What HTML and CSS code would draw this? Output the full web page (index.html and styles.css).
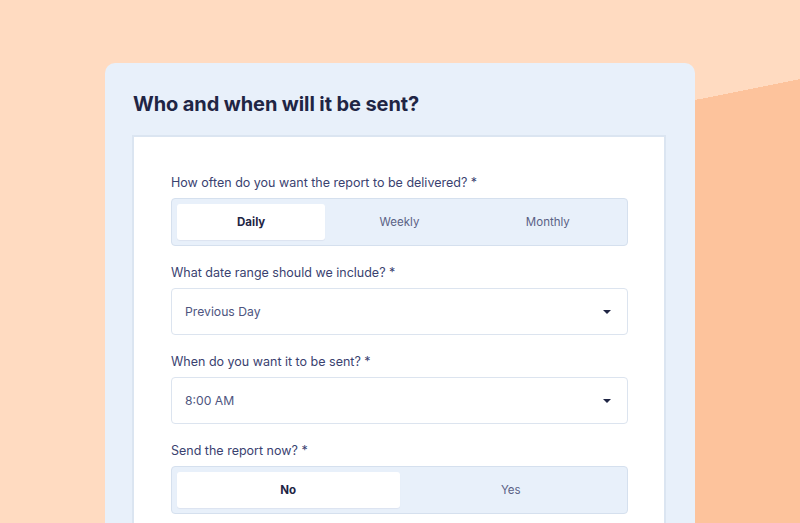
FILE: index.html
```html
<!DOCTYPE html>
<html lang="en">
<head>
    <meta charset="UTF-8">
    <meta name="viewport" content="width=device-width, initial-scale=1.0">
    <title>Report Schedule</title>
    <link rel="stylesheet" href="styles.css">
</head>
<body>
    <div class="schedule-card">
        <h2 class="card-title">Who and when will it be sent?</h2>

        <div class="form-panel">
            <div class="field">
                <label class="field-label">How often do you want the report to be delivered? *</label>
                <div class="segmented">
                    <button class="segment active">Daily</button>
                    <button class="segment">Weekly</button>
                    <button class="segment">Monthly</button>
                </div>
            </div>

            <div class="field">
                <label class="field-label">What date range should we include? *</label>
                <div class="select">
                    <span>Previous Day</span>
                    <span class="caret"></span>
                </div>
            </div>

            <div class="field">
                <label class="field-label">When do you want it to be sent? *</label>
                <div class="select">
                    <span>8:00 AM</span>
                    <span class="caret"></span>
                </div>
            </div>

            <div class="field">
                <label class="field-label">Send the report now? *</label>
                <div class="segmented">
                    <button class="segment active">No</button>
                    <button class="segment">Yes</button>
                </div>
            </div>
        </div>
    </div>
</body>
</html>
```

FILE: styles.css
```css
html, body {
    height: 100%;
}

/* peach backdrop with a darker slanted block on the right */
body {
    margin: 0;
    overflow: hidden;
    font-family: Inter, "Noto Sans", Arial, sans-serif;
    background:
        linear-gradient(168.7deg, transparent 101px, #FDC39C 101px) right top / 120px 100% no-repeat,
        #FFDBC1;
}

.schedule-card {
    width: 590px;
    margin: 63px 0 0 105px;
    padding: 28px 29px 0 27px;
    box-sizing: border-box;
    min-height: 500px;
    background-color: #E8F0FA;
    border-radius: 10px;
}

.card-title {
    margin: 0 0 17px 1px;
    font-size: 20px;
    line-height: 27px;
    font-weight: 700;
    color: #1F2544;
    letter-spacing: -0.1px;
}

.form-panel {
    background-color: #fff;
    border: 2px solid #DBE5F1;
    border-bottom: none;
    padding: 38px 36px 40px 37px;
    min-height: 400px;
}

.field + .field {
    margin-top: 19px;
}

.field-label {
    display: block;
    font-size: 12.5px;
    line-height: 16px;
    color: #3A4270;
    margin-bottom: 7px;
}

/* Segmented buttons */
.segmented {
    display: flex;
    padding: 5px;
    background-color: #E8F0FA;
    border: 1px solid #D5E0EE;
    border-radius: 4px;
    height: 48px;
    box-sizing: border-box;
}

.segment {
    flex: 1;
    border: none;
    background: none;
    border-radius: 3px;
    font-family: inherit;
    font-size: 11.5px;
    color: #5A6185;
    cursor: pointer;
}

.segment.active {
    background-color: #fff;
    color: #1F2544;
    font-weight: 700;
    box-shadow: 0 1px 1px rgba(30, 40, 80, 0.06);
}

/* Dropdowns */
.select {
    display: flex;
    align-items: center;
    justify-content: space-between;
    height: 47px;
    box-sizing: border-box;
    padding: 0 16px 0 13px;
    border: 1px solid #DCE4EF;
    border-radius: 4px;
    font-size: 12.2px;
    color: #4E5580;
}

.caret {
    width: 0;
    height: 0;
    border-left: 4px solid transparent;
    border-right: 4px solid transparent;
    border-top: 4px solid #1F2544;
}
```
